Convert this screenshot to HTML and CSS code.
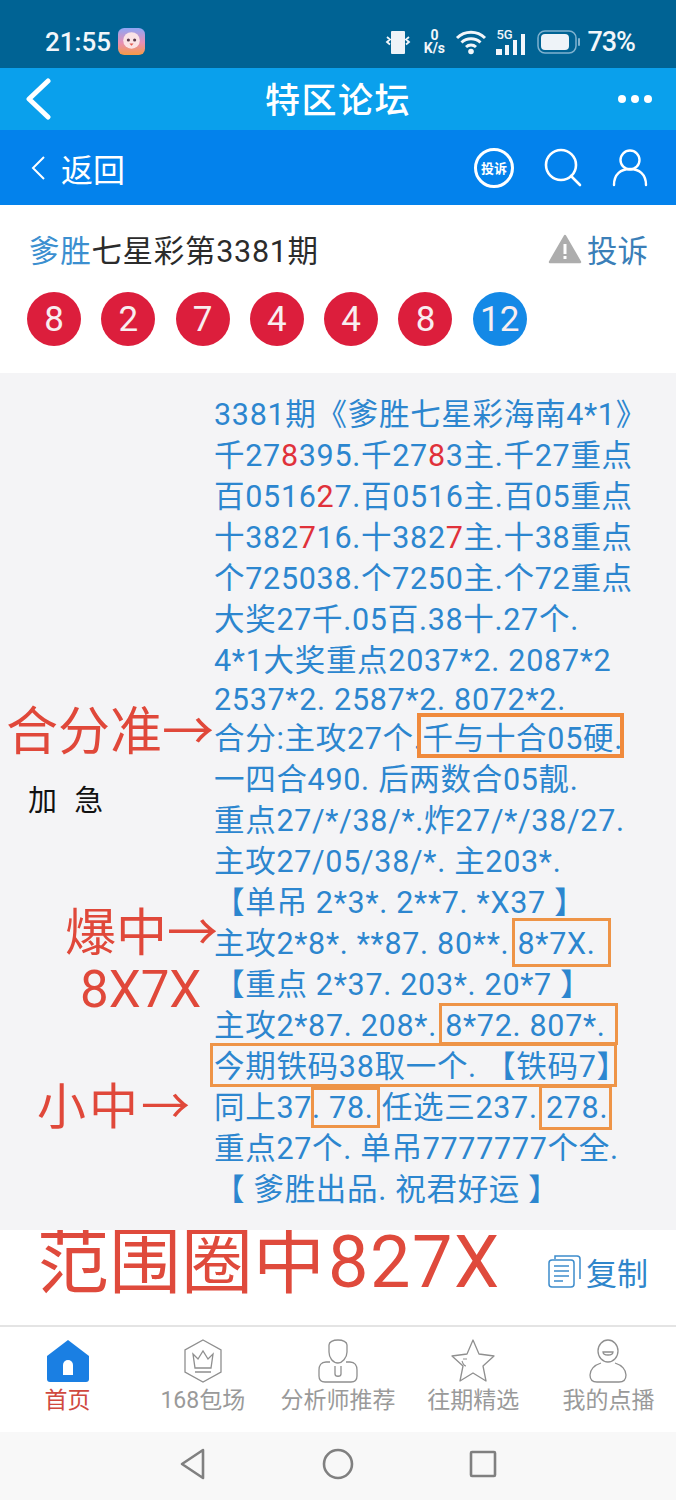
FILE: index.html
```html
<!DOCTYPE html>
<html lang="zh-CN">
<head>
<meta charset="utf-8">
<title>特区论坛</title>
<link rel="stylesheet" href="styles.css">
</head>
<body>
<div class="phone">
  <header class="status">
    <div class="status-left">
      <span class="time">21:55</span>
      <svg class="app-icon" width="27" height="27" viewBox="0 0 26 26"><defs><linearGradient id="ag" x1="0" y1="0" x2="0" y2="1"><stop offset="0" stop-color="#8fa6f5"/><stop offset=".55" stop-color="#e78fb4"/><stop offset="1" stop-color="#f59a45"/></linearGradient></defs><rect width="26" height="26" rx="6" fill="url(#ag)"/><circle cx="13" cy="12" r="8" fill="#fbe3e6"/><circle cx="10" cy="11.500" r="1.500" fill="#5b3a4a"/><circle cx="16" cy="11.500" r="1.500" fill="#5b3a4a"/><path d="M11 15h4l-2 2z" fill="#e2574c"/></svg>
    </div>
    <div class="status-right">
      <svg width="30" height="30" viewBox="0 0 30 30"><rect x="8" y="4" width="14" height="23" rx="1" fill="#eef3f8"/><path d="M4 10l3 2.500-3 2.500 3 2.500M26 10l-3 2.500 3 2.500-3 2.500" fill="none" stroke="#f2f6fa" stroke-width="1.800"/></svg>
      <span class="speed"><b>0</b><b>K/s</b></span>
      <svg width="32" height="26" viewBox="0 0 32 26"><path d="M2 9a20 20 0 0 1 28 0M6.500 13.500a14 14 0 0 1 19 0M11 18a7.500 7.500 0 0 1 10 0" fill="none" stroke="#f2f6fa" stroke-width="3"/><circle cx="16" cy="22.500" r="2.800" fill="#f2f6fa"/></svg>
      <span class="signal">
        <span class="fiveg">5G</span>
        <svg width="33" height="22" viewBox="0 0 33 22"><rect x="0" y="16" width="6" height="6" fill="#f2f6fa"/><rect x="9" y="12" width="4" height="10" fill="#f2f6fa"/><rect x="17" y="7" width="4" height="15" fill="#f2f6fa"/><rect x="25" y="1" width="4" height="21" fill="#f2f6fa"/></svg>
      </span>
      <svg width="44" height="26" viewBox="0 0 44 26"><rect x="1" y="2" width="38" height="22" rx="7" fill="none" stroke="#7fb2cf" stroke-width="1.500"/><rect x="4" y="5" width="28" height="16" rx="4" fill="#eef3f8"/><rect x="41" y="9" width="2" height="8" rx="1" fill="#7fb2cf"/></svg>
      <span class="battery">73%</span>
    </div>
  </header>

  <nav class="topbar">
    <svg class="top-back" width="30" height="42" viewBox="0 0 30 42"><path d="M24 3L5 21l19 18" fill="none" stroke="#fff" stroke-width="5" stroke-linecap="round" stroke-linejoin="round"/></svg>
    <h1 class="top-title">特区论坛</h1>
    <span class="dots"><i></i><i></i><i></i></span>
  </nav>

  <nav class="subbar">
    <div class="sub-back">
      <svg width="16" height="26" viewBox="0 0 16 26"><path d="M14 2L3 13l11 11" fill="none" stroke="#fff" stroke-width="2"/></svg>
      <span>返回</span>
    </div>
    <div class="sub-tools">
      <span class="complain-badge">投诉</span>
      <svg width="40" height="40" viewBox="0 0 40 40"><circle cx="18" cy="17" r="15" fill="none" stroke="#fff" stroke-width="2.600"/><path d="M28 28l9 9" stroke="#fff" stroke-width="2.600" stroke-linecap="round"/></svg>
      <svg width="36" height="40" viewBox="0 0 36 40"><circle cx="18" cy="12" r="9.500" fill="none" stroke="#fff" stroke-width="2.400"/><path d="M2 37c0-11 7-16 16-16s16 5 16 16" fill="none" stroke="#fff" stroke-width="2.400" stroke-linecap="round"/></svg>
    </div>
  </nav>

  <section class="head">
    <div class="head-row">
      <h2 class="post-title"><span class="author">爹胜</span>七星彩第3381期</h2>
      <div class="report">
        <svg width="34" height="30" viewBox="0 0 34 30"><path d="M17 2L32 28H2z" fill="#adadad" stroke="#adadad" stroke-width="2.500" stroke-linejoin="round"/><rect x="15.500" y="10" width="3" height="10" fill="#fff"/><rect x="15.500" y="22" width="3" height="3" fill="#fff"/></svg>
        <span>投诉</span>
      </div>
    </div>
    <div class="balls">
      <span class="ball">8</span><span class="ball">2</span><span class="ball">7</span><span class="ball">4</span><span class="ball">4</span><span class="ball">8</span><span class="ball ball-blue">12</span>
    </div>
  </section>

  <main class="content">
    <div class="side">加 急</div>
    <div class="lines">
      <p>3381期《爹胜七星彩海南4*1》</p>
      <p>千27<em>8</em>395.千27<em>8</em>3主.千27重点</p>
      <p>百0516<em>2</em>7.百0516主.百05重点</p>
      <p>十382<em>7</em>16.十382<em>7</em>主.十38重点</p>
      <p>个725038.个7250主.个72重点</p>
      <p>大奖27千.05百.38十.27个.</p>
      <p>4*1大奖重点2037*2. 2087*2</p>
      <p class="tight">2537*2. 2587*2. 8072*2.</p>
      <p>合分:主攻27个.千与十合05硬.</p>
      <p>一四合490. 后两数合05靓.</p>
      <p>重点27/*/38/*.炸27/*/38/27.</p>
      <p>主攻27/05/38/*. 主203*.</p>
      <p>【单吊 2*3*. 2**7. *X37 】</p>
      <p>主攻2*8*. **87. 80**. 8*7X.</p>
      <p>【重点 2*37. 203*. 20*7 】</p>
      <p>主攻2*87. 208*. 8*72. 807*.</p>
      <p>今期铁码38取一个. 【铁码7】</p>
      <p>同上37. 78. 任选三237. 278.</p>
      <p>重点27个. 单吊7777777个全.</p>
      <p>【 爹胜出品. 祝君好运 】</p>
    </div>
    <span class="note note-he">合分准→</span>
    <span class="note note-bao">爆中→</span>
    <span class="note note-bao2">8X7X</span>
    <span class="note note-xiao">小中→</span>
    <span class="box box-1"></span>
    <span class="box box-2"></span>
    <span class="box box-3"></span>
    <span class="box box-4"></span>
    <span class="box box-5"></span>
    <span class="box box-6"></span>
  </main>

  <section class="foot">
    <span class="range">范围圈中<span class="range-num">827X</span></span>
    <div class="copy">
      <svg width="36" height="36" viewBox="0 0 36 36"><path d="M8 6V3h22a3 3 0 0 1 3 3v20" fill="none" stroke="#3d8ccb" stroke-width="1.500"/><rect x="2" y="7" width="25" height="27" rx="3" fill="none" stroke="#3d8ccb" stroke-width="1.500"/><path d="M7 13h15M7 18h15M7 23h15M7 28h9" stroke="#3d8ccb" stroke-width="1.500"/></svg>
      <span>复制</span>
    </div>
  </section>

  <footer class="tabs">
    <div class="tab tab-active">
      <svg width="44" height="44" viewBox="0 0 44 44"><path d="M22 1L43 17V40a3 3 0 0 1-3 3H4a3 3 0 0 1-3-3V17z" fill="#1a7fe3"/><path d="M17 36V26a5 5 0 0 1 10 0v10z" fill="#fff"/></svg>
      <span>首页</span>
    </div>
    <div class="tab">
      <svg width="44" height="44" viewBox="0 0 44 44"><path d="M22 1L40 11V33L22 43 4 33V11z" fill="none" stroke="#8f8f8f" stroke-width="1.300"/><path d="M12 15l5 5 5-8 5 8 5-5-2 14H14zM14 33h16" fill="none" stroke="#8f8f8f" stroke-width="1.300"/></svg>
      <span>168包场</span>
    </div>
    <div class="tab">
      <svg width="44" height="44" viewBox="0 0 44 44"><path d="M13 6c0-3 4-5 9-5s9 2 9 5v7c0 6-5 11-9 11-5 0-9-5-9-11z" fill="none" stroke="#8f8f8f" stroke-width="1.300"/><path d="M14 23h-4c-5 0-7 4-7 8v6c0 4 2 6 6 6h26c4 0 6-2 6-6v-6c0-4-2-8-7-8h-4" fill="none" stroke="#8f8f8f" stroke-width="1.300"/><path d="M19 27v8c0 3 6 3 6 0v-8" fill="none" stroke="#8f8f8f" stroke-width="1.300"/></svg>
      <span>分析师推荐</span>
    </div>
    <div class="tab">
      <svg width="44" height="44" viewBox="0 0 44 44"><path d="M22 1l6 14 15 2-11 10 3 15-13-8-13 8 3-15L1 17l15-2z" fill="none" stroke="#8f8f8f" stroke-width="1.300" stroke-linejoin="round"/><path d="M12 20l4 0M11 22c1 3 3 5 4 5" fill="none" stroke="#8f8f8f" stroke-width="1.100"/></svg>
      <span>往期精选</span>
    </div>
    <div class="tab">
      <svg width="44" height="44" viewBox="0 0 44 44"><ellipse cx="22" cy="12" rx="10" ry="11" fill="none" stroke="#8f8f8f" stroke-width="1.300"/><path d="M17 13h10c0 4-10 4-10 0z" fill="none" stroke="#8f8f8f" stroke-width="1.300"/><path d="M15 24c-7 2-11 7-11 12 0 5 3 7 7 7h22c4 0 7-2 7-7 0-5-4-10-11-12" fill="none" stroke="#8f8f8f" stroke-width="1.300"/></svg>
      <span>我的点播</span>
    </div>
  </footer>

  <div class="sysnav">
    <svg width="28" height="32" viewBox="0 0 28 32"><path d="M24 2L3 16l21 14z" fill="none" stroke="#808080" stroke-width="2.600" stroke-linejoin="round"/></svg>
    <svg width="32" height="32" viewBox="0 0 32 32"><circle cx="16" cy="16" r="14" fill="none" stroke="#808080" stroke-width="2.600"/></svg>
    <svg width="28" height="28" viewBox="0 0 28 28"><rect x="2" y="2" width="24" height="24" rx="1" fill="none" stroke="#808080" stroke-width="2.600"/></svg>
  </div>
</div>
</body>
</html>
```
FILE: styles.css
```css
* { box-sizing: border-box; margin: 0; padding: 0; }
html, body { background: #fff; }
body { margin: 0; font-family: Roboto, "Noto Sans CJK SC", sans-serif; }
.phone { width: 676px; height: 1500px; display: flex; flex-direction: column; overflow: hidden; }

.status { height: 68px; flex: none; background: #006394; display: flex; align-items: center; justify-content: space-between; padding: 15px 41px 0 45px; color: #f2f6fa; }
.status-left { display: flex; align-items: center; gap: 7px; }
.time { font-size: 26px; font-weight: 500; }
.status-right { display: flex; align-items: center; gap: 8px; }
.speed { display: flex; flex-direction: column; align-items: center; line-height: 13px; width: 26px; }
.speed b { font-size: 14px; font-weight: 700; }
.signal { position: relative; display: flex; align-items: flex-end; height: 26px; margin-left: 1px; }
.fiveg { position: absolute; left: 0; top: -1px; font-size: 13px; font-weight: 500; line-height: 13px; }
.battery { font-size: 27px; font-weight: 500; margin-left: -2px; letter-spacing: -1px; }

.topbar { height: 62px; flex: none; background: #0aa0ec; display: flex; align-items: center; justify-content: space-between; padding: 0 24px 0 24px; position: relative; color: #fff; }
.top-title { position: absolute; left: 0; right: 0; top: 3px; text-align: center; font-size: 35px; font-weight: 500; line-height: 62px; letter-spacing: 1.500px; }
.dots { display: flex; gap: 5px; }
.dots i { width: 8px; height: 8px; border-radius: 50%; background: #fff; display: block; }

.subbar { height: 75px; flex: none; background: #0382ec; display: flex; align-items: center; justify-content: space-between; padding: 0 28px 0 30px; color: #fff; }
.sub-back { display: flex; align-items: center; gap: 15px; font-size: 32px; }
.sub-tools { display: flex; align-items: center; gap: 29px; }
.complain-badge { width: 40px; height: 40px; border: 3px solid #fff; border-radius: 50%; font-size: 13px; font-weight: 700; display: flex; align-items: center; justify-content: center; white-space: nowrap; }

.head { height: 168px; flex: none; background: #fff; padding: 22px 28px 0 27px; }
.head-row { display: flex; justify-content: space-between; align-items: center; height: 44px; }
.post-title { font-size: 30.500px; font-weight: 400; color: #2b2b2b; padding-left: 2px; letter-spacing: 0.700px; }
.author { color: #3b8fd0; }
.report { display: flex; align-items: center; gap: 5px; font-size: 30.500px; color: #3b7fb8; }
.balls { display: flex; gap: 20.300px; margin-top: 21px; }
.ball { width: 54px; height: 54px; border-radius: 50%; background: #dc1e3c; color: #f8eef0; font-size: 35px; display: flex; align-items: center; justify-content: center; }
.ball-blue { background: #1489e6; }

.content { height: 857px; flex: none; background: #f4f4f6; position: relative; padding: 21px 0 0 28px; display: flex; }
.side { width: 186px; flex: none; font-size: 29px; color: #111; margin-top: 387px; line-height: 40px; white-space: pre; word-spacing: 10px; }
.lines { font-size: 30.500px; line-height: 41px; color: #2c86cf; white-space: nowrap; letter-spacing: 0.700px; }
.lines p.tight { line-height: 37px; }
.lines em { font-style: normal; color: #e0313a; }

.note { position: absolute; color: #e0483a; white-space: nowrap; line-height: 1; }
.note-he { left: 6px; top: 334px; font-size: 52px; }
.note-bao { left: 65px; top: 535px; font-size: 51px; }
.note-bao2 { left: 80px; top: 591px; font-size: 51px; }
.note-xiao { left: 37px; top: 710px; font-size: 49px; letter-spacing: 3px; }

.box { position: absolute; border: 3px solid #ee9447; }
.box-1 { left: 417px; top: 340px; width: 207px; height: 45px; border-width: 4px; border-color: #f08a3c; }
.box-2 { left: 512px; top: 545px; width: 99px; height: 49px; }
.box-3 { left: 439px; top: 630px; width: 179px; height: 42px; }
.box-4 { left: 210px; top: 670px; width: 407px; height: 44px; }
.box-5 { left: 311px; top: 714px; width: 69px; height: 41px; }
.box-6 { left: 539px; top: 712px; width: 73px; height: 45px; }

.foot { height: 97px; flex: none; background: #fff; display: flex; justify-content: space-between; padding: 0 28px 0 37px; border-bottom: 2px solid #e4e4e4; }
.range { color: #df4a3c; font-size: 72px; line-height: 66px; white-space: nowrap; }
.range-num { letter-spacing: 1.500px; margin-left: 3px; }
.copy { display: flex; align-items: center; gap: 3px; height: 36px; margin-top: 23px; font-size: 31px; color: #2f86cb; }

.tabs { height: 105px; flex: none; background: #fff; display: grid; grid-template-columns: repeat(5, 1fr); padding: 12px 0 0 0; }
.tab { display: flex; flex-direction: column; align-items: center; gap: 3px; font-size: 23px; color: #9a9a9a; line-height: 30px; white-space: nowrap; }
.tab-active { color: #d0493f; }

.sysnav { height: 68px; flex: none; background: #f8f8f8; display: flex; align-items: center; justify-content: center; gap: 115px; padding-bottom: 4px; }
```
